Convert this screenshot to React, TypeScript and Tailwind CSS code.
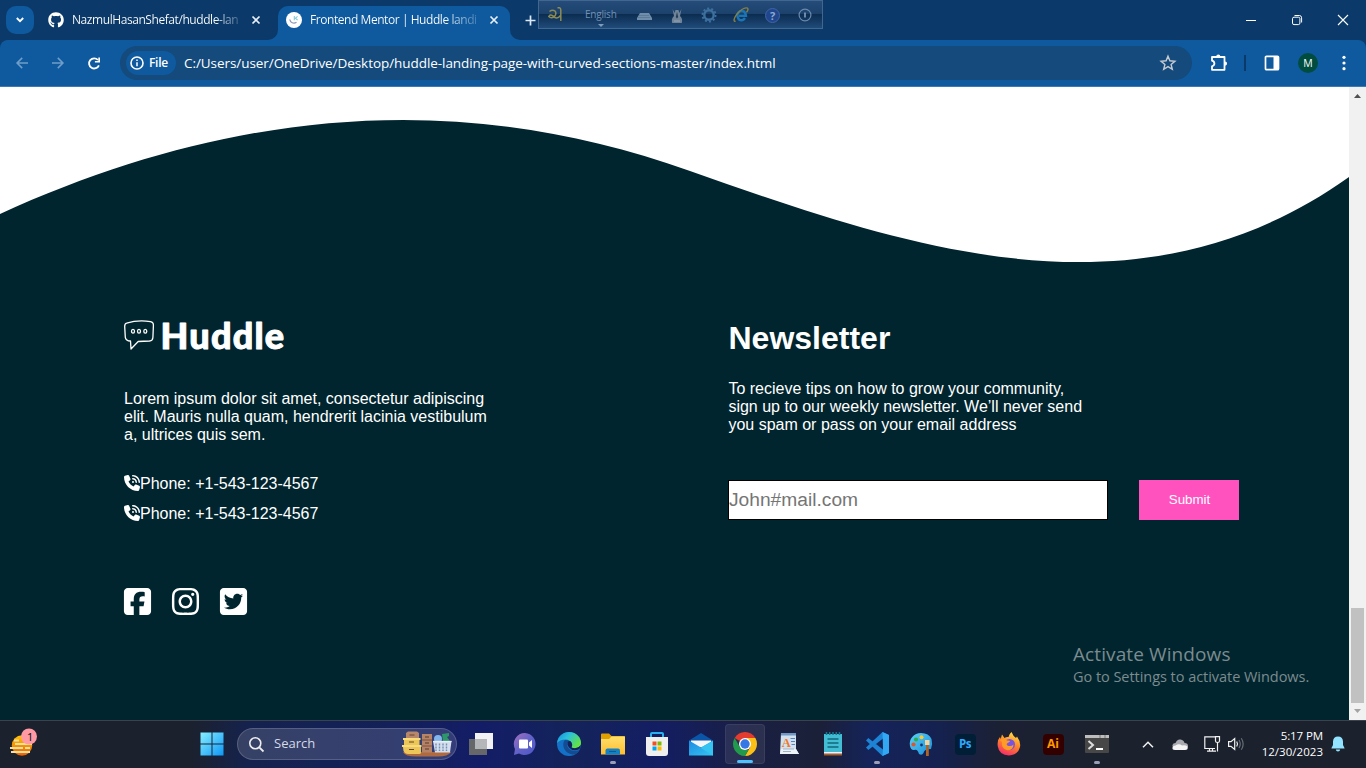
import type { ReactNode } from 'react';
import { FaGithub, FaPhoneVolume, FaSquareFacebook, FaInstagram, FaSquareTwitter } from 'react-icons/fa6';

function Svg({ w, h, children, vb }: { w: number; h: number; children: ReactNode; vb?: string }) {
  return (
    <svg width={w} height={h} viewBox={vb ?? `0 0 ${w} ${h}`} fill="none" className="block shrink-0 overflow-visible">
      {children}
    </svg>
  );
}

function Cross() {
  return (
    <Svg w={8} h={8}>
      <path d="M0.5 0.5 7.5 7.5M7.5 0.5 0.5 7.5" stroke="#e8f1fb" strokeWidth="1.7" />
    </Svg>
  );
}

function TabStrip() {
  return (
    <div className="flex h-10 items-start bg-[#0b3a6a] pt-1.5 text-white">
      <div className="ml-1.5 flex h-7 w-7 items-center justify-center rounded-[10px] bg-[#0f5a9e]">
        <Svg w={8} h={6}>
          <path d="M0.8 1 4 4.2 7.2 1" stroke="#fff" strokeWidth="1.8" />
        </Svg>
      </div>
      <div className="ml-3.5 flex h-7 w-[230px] items-center">
        <FaGithub className="h-4 w-4 shrink-0" />
        <div className="ml-2 w-[168px] whitespace-nowrap bg-linear-to-r from-white from-85% to-[#ffffff30] bg-clip-text text-[12px] tracking-[-0.43px] text-transparent">
          NazmulHasanShefat/huddle-lan
        </div>
        <div className="ml-[12px]"><Cross /></div>
      </div>
      <div className="relative flex h-[34px] w-[232px] items-start rounded-t-[10px] bg-[#0f5a9e]">
        <div className="absolute bottom-0 -left-2.5"><Svg w={10} h={10}><path d="M10 0V10H0A10 10 0 0 0 10 0Z" fill="#0f5a9e" /></Svg></div>
        <div className="absolute bottom-0 -right-2.5"><Svg w={10} h={10}><path d="M0 0V10H10A10 10 0 0 1 0 0Z" fill="#0f5a9e" /></Svg></div>
        <div className="flex h-7 items-center pl-2">
          <Svg w={16} h={16}>
            <circle cx="8" cy="8" r="8" fill="#fff" />
            <path d="M3.8 7.5C4.3 10.5 7.5 12.3 10.5 10.3" stroke="#8d97b8" strokeWidth="1.3" />
            <path d="M8.3 4V8.2M11.6 4.3 9.300 6.3 11.6 8" stroke="#8ccbd6" strokeWidth="1.1" />
          </Svg>
          <div className="ml-2 w-[168px] whitespace-nowrap bg-linear-to-r from-white from-80% to-[#ffffff30] bg-clip-text text-[12px] tracking-[-0.44px] text-transparent">
            Frontend Mentor | Huddle landi
          </div>
          <div className="ml-3"><Cross /></div>
        </div>
      </div>
      <div className="flex h-7 w-10 items-center justify-center">
        <Svg w={11} h={11}><path d="M5.5 0.5V10.5M0.5 5.5H10.5" stroke="#dce8f5" strokeWidth="1.7" /></Svg>
      </div>
      <div className="ml-auto flex h-7 items-center">
        <div className="flex w-[46px] justify-center"><Svg w={10} h={10}><path d="M0 5.5H10" stroke="#fff" /></Svg></div>
        <div className="flex w-[46px] justify-center">
          <Svg w={10} h={10}>
            <rect x="0.5" y="2.2" width="7.4" height="7.4" rx="1.5" stroke="#fff" />
            <path d="M2.5 0.5H7.3Q9.6 0.5 9.6 2.8V7.5" stroke="#fff" />
          </Svg>
        </div>
        <div className="flex w-[46px] justify-center"><Svg w={10} h={10}><path d="M0 0 10 10M10 0 0 10" stroke="#fff" strokeWidth="1.1" /></Svg></div>
      </div>
    </div>
  );
}

function InputMethodBar() {
  return (
    <div className="absolute top-0 left-[538px] flex h-[29px] w-[285px] items-center border border-[#42678f] bg-linear-to-b from-[#254c7a] from-0% via-[#1b416b] via-50% to-[#1f4b7b] text-[#7192b5]">
      <div className="absolute inset-x-0 bottom-0 h-[14px] bg-linear-to-b from-[#0b2c50] to-[#204b7a]" />
      <div className="relative flex h-full w-full">
        <div className="flex w-[34px] items-center justify-center">
          <Svg w={15} h={15}>
            <path d="M1.500 4.500Q4.500 2.200 7 4Q9 6.500 6.500 9.300Q3.200 12 .800 9.500Q2.200 6.800 5 8.800Q8.500 13.500 12.500 8.500M9.500 .800H11.500Q12.800 1 12.800 3V14" stroke="#8d8b54" strokeWidth="1.5" />
          </Svg>
        </div>
        <div className="flex w-[56px] flex-col items-center pt-[6px]">
          <span className="text-[10px] leading-[14px] tracking-[-0.2px]">English</span>
          <div className="mt-[3px]"><Svg w={6} h={3}><path d="M0 0H6L3 3Z" fill="#7c9dbd" /></Svg></div>
        </div>
        <div className="flex w-[32px] items-center justify-center pt-[3px]">
          <Svg w={15} h={7}><path d="M3 0H12L15 5V7H0V5Z" fill="#708da9" /><path d="M2.5 2.5H12.5M1.5 4.5H13.5" stroke="#46688b" strokeDasharray="1 1" /></Svg>
        </div>
        <div className="flex w-[32px] items-center justify-center pt-[3px]">
          <Svg w={12} h={15}>
            <path d="M1.5 0 3.7 4 4.5 1H7.5L8.3 4 10.5 0 9 7Q12 9.5 10.8 14H1.2Q0 9.5 3 7Z" fill="#6f8498" />
            <path d="M6 3 4.8 8 6 9.6 7.2 8Z" fill="#253c54" /><path d="M3 12H9" stroke="#93a5b4" />
          </Svg>
        </div>
        <div className="flex w-[33px] items-center justify-center pt-[1px]">
          <Svg w={16} h={16}>
            <circle cx="8" cy="8" r="6.6" stroke="#3e709f" strokeWidth="1.800" strokeDasharray="2.1 2.047" />
            <circle cx="8" cy="8" r="4.7" stroke="#3e709f" strokeWidth="2.4" />
          </Svg>
        </div>
        <div className="flex w-[32px] items-center justify-center pt-[1px]">
          <Svg w={16} h={16}>
            <path d="M12 11Q9 15 5.7 12.2Q2.5 7 7 4.3Q12.5 3 12.9 8.7H6" stroke="#1b75b5" strokeWidth="2.5" />
            <path d="M2.6 14.3Q-1 14.5 3.8 7.2Q10.5-.5 14.6 1.2Q15.8 2.4 13.5 5.4" stroke="#877f43" strokeWidth="1.4" />
          </Svg>
        </div>
        <div className="flex w-[31px] items-center justify-center pt-[1px]">
          <div className="flex h-[15px] w-[15px] items-center justify-center rounded-full border border-[#4164a7] bg-[#20468d] text-[11px] leading-none font-bold text-[#8daad0]">?</div>
        </div>
        <div className="flex w-[34px] items-center justify-center pt-[1px]">
          <Svg w={14} h={14}><circle cx="7" cy="7" r="5.9" stroke="#6b89aa" strokeWidth="1.2" /><path d="M7 4.5V9.5" stroke="#8ca8c4" strokeWidth="1.5" /></Svg>
        </div>
      </div>
    </div>
  );
}

function Toolbar() {
  return (
    <div className="bg-[#0b3a6a]">
      <div className="flex h-[47px] items-start rounded-t-[8px] border-b border-[#3d7ab3] bg-[#0f5a9e] pt-1.5 text-white">
        <div className="flex h-[34px] items-center pl-4">
          <Svg w={12} h={12}><path d="M12 6H1.2M6.2 .9 1.1 6 6.2 11.1" stroke="#6f9dc9" strokeWidth="1.6" /></Svg>
          <div className="ml-6"><Svg w={12} h={12}><path d="M0 6H10.8M5.8 .9 10.9 6 5.8 11.1" stroke="#6f9dc9" strokeWidth="1.6" /></Svg></div>
          <div className="ml-6"><Svg w={12} h={13}><path d="M10.9 8.3A5.1 5.1 0 1 1 10 3" stroke="#fff" strokeWidth="1.8" /><path d="M12 .5V5.6H6.9V4H10.3V.5Z" fill="#fff" /></Svg></div>
        </div>
        <div className="ml-5 flex h-[34px] w-[1072px] items-center rounded-full bg-[#144a7c] pl-1.5">
          <div className="flex h-6 w-[50px] items-center rounded-full bg-[#0f5a9e] pl-[4px]">
            <Svg w={14} h={14}><circle cx="7" cy="7" r="6" stroke="#fff" strokeWidth="1.6" /><path d="M7 6.2V10.2M7 3.6V5.1" stroke="#fff" strokeWidth="1.5" /></Svg>
            <span className="ml-[5px] text-[12px] font-semibold tracking-[-0.3px]">File</span>
          </div>
          <span className="ml-2 pt-px text-[13.5px] tracking-[-0.06px] whitespace-nowrap">
            C:/Users/user/OneDrive/Desktop/huddle-landing-page-with-curved-sections-master/index.html
          </span>
          <div className="mr-4 ml-auto">
            <Svg w={16} h={16}><path d="M8 1.2 9.9 5.8 14.9 6.2 11.1 9.4 12.3 14.3 8 11.6 3.7 14.3 4.9 9.4 1.1 6.2 6.1 5.8Z" stroke="#c6cbd1" strokeWidth="1.4" /></Svg>
          </div>
        </div>
        <div className="flex h-[34px] items-center">
          <div className="ml-[18px]">
            <Svg w={18} h={18}>
              <path d="M2 3H14.500V15.800H2V12.3Q4.4 11.6 4.4 9.500T2 6.700Z" stroke="#fff" strokeWidth="1.8" strokeLinejoin="round" />
              <path d="M6.2 2.700A2.1 2.1 0 0 1 10.4 2.700ZM15 7.500A2.1 2.1 0 0 1 15 11.7Z" fill="#fff" />
            </Svg>
          </div>
          <div className="ml-4 h-4 w-0.5 bg-[#0b3a6a]" />
          <div className="ml-[19px]"><Svg w={14} h={14}><rect x=".5" y=".3" width="13" height="13.4" rx="1" stroke="#fff" strokeWidth="1.7" /><path d="M8.5 .5H13.5V13.5H8.5Z" fill="#fff" /></Svg></div>
          <div className="ml-[19px] flex h-5 w-5 items-center justify-center rounded-full bg-[#004d40] pt-px text-[10.5px]">M</div>
          <div className="ml-6"><Svg w={4} h={14}><circle cx="2" cy="1.3" r="1.6" fill="#fff" /><circle cx="2" cy="7" r="1.6" fill="#fff" /><circle cx="2" cy="12.7" r="1.6" fill="#fff" /></Svg></div>
        </div>
      </div>
    </div>
  );
}

function HuddleLogo() {
  return (
    <svg width="162" height="34" viewBox="0 0 162 34" className="block overflow-visible">
      <path d="M2.6 4.2Q14 .7 26.5 2.7Q29.6 3.3 29.4 6.5L28.9 18.5Q28.7 21.7 25.5 22L14.2 22.5Q11.3 25.5 7 30L6.5 22Q1.8 21.8 1.3 18.3L.7 7.5Q.7 4.7 2.6 4.2Z" fill="none" stroke="#fff" strokeWidth="1.3" strokeLinejoin="round" />
      <g fill="none" stroke="#fff" strokeWidth="1.3">
        <ellipse cx="9" cy="12.3" rx="1.5" ry="1.9" /><ellipse cx="15" cy="12.3" rx="1.5" ry="1.9" /><ellipse cx="21.3" cy="12.3" rx="1.5" ry="1.9" />
      </g>
      <text x="36.6" y="29.6" fontFamily="Lato, sans-serif" fontWeight="900" fontSize="36" textLength="123.5" lengthAdjust="spacing" fill="#fff" stroke="#fff" strokeWidth="1" strokeLinejoin="round">Huddle</text>
    </svg>
  );
}

function Page() {
  return (
    <main className="relative h-[633px] w-[1349px] overflow-hidden bg-[#00252e] font-['Liberation_Sans',sans-serif] text-[16px] leading-[18px] text-white">
      <svg width="1349" height="190" viewBox="0 0 1349 190" className="block">
        <path d="M0 0H1349V90C1137 241 905 160 690 84C460 1 230 22 0 127Z" fill="#fff" />
      </svg>
      <div className="flex pt-[42px] pl-[124px]">
        <section className="w-[604px]">
          <HuddleLogo />
          <p className="mt-[37px] w-[370px]">
            Lorem ipsum dolor sit amet, consectetur adipiscing elit. Mauris nulla quam, hendrerit lacinia vestibulum a, ultrices quis sem.
          </p>
          <div className="mt-[31px] flex flex-col gap-3">
            <div className="flex items-center"><FaPhoneVolume className="mb-0.5 h-4 w-4" />Phone: +1-543-123-4567</div>
            <div className="flex items-center"><FaPhoneVolume className="mb-0.5 h-4 w-4" />Phone: +1-543-123-4567</div>
          </div>
          <div className="mt-[63px] -ml-[2.5px] flex gap-[17px]">
            <FaSquareFacebook className="h-[31px] w-[31px]" />
            <FaInstagram className="h-[31px] w-[31px]" />
            <FaSquareTwitter className="h-[31px] w-[31px]" />
          </div>
        </section>
        <section>
          <h1 className="mt-[1px] pl-[0.5px] text-[32px] leading-[37px] font-bold">Newsletter</h1>
          <p className="mt-[23px] w-[364px] pl-[0.4px]">
            To recieve tips on how to grow your community, sign up to our weekly newsletter. We’ll never send you spam or pass on your email address
          </p>
          <form className="mt-[46px] flex gap-[31px]" onSubmit={(e) => e.preventDefault()}>
            <input placeholder="John#mail.com" className="h-10 w-[380px] border border-black bg-white p-0 text-[19.2px] text-black outline-none placeholder:text-[#757575]" />
            <button className="h-10 w-[100px] bg-[#ff52bf] pl-px text-[13.33px] text-white">Submit</button>
          </form>
        </section>
      </div>
      <div className="absolute top-[555px] left-[1073px] font-['Open_Sans','Noto_Sans',sans-serif] whitespace-nowrap text-[#7c8b8f]">
        <div className="text-[19px] leading-6 tracking-[0.1px]">Activate Windows</div>
        <div className="text-[14.5px] leading-[22px] tracking-[-0.04px]">Go to Settings to activate Windows.</div>
      </div>
    </main>
  );
}

function Scrollbar() {
  return (
    <div className="flex h-[633px] w-[17px] flex-col items-center bg-[#f1f1f1]">
      <div className="pt-[7px]"><Svg w={7} h={4}><path d="M3.5 0 7 4H0Z" fill="#505050" /></Svg></div>
      <div className="mt-[510px] h-[95px] w-[13px] bg-[#c1c1c1]" />
      <div className="mt-[6px]"><Svg w={7} h={4}><path d="M0 0H7L3.5 4Z" fill="#a3a3a3" /></Svg></div>
    </div>
  );
}

function Task({ children, running, active }: { children: ReactNode; running?: boolean; active?: boolean }) {
  return (
    <div className="flex h-[46px] w-11 shrink-0 items-center justify-center">
      <div className={active ? 'relative flex h-10 w-10 items-center justify-center rounded border border-[#ffffff12] bg-[#ffffff14]' : 'relative flex h-10 w-10 items-center justify-center'}>
        {children}
        {running && <div className="absolute bottom-0 h-[3px] w-1.5 rounded-full bg-[#9a9fb8]" />}
        {active && <div className="absolute bottom-0 h-[3px] w-4 rounded-full bg-[#4cc2ff]" />}
      </div>
    </div>
  );
}

function Gradients() {
  return (
    <svg width="0" height="0" className="absolute">
      <defs>
        <linearGradient id="win" x1="0" y1="0" x2="24" y2="24" gradientUnits="userSpaceOnUse"><stop stopColor="#8af1ff" /><stop offset="1" stopColor="#0a95f5" /></linearGradient>
        <linearGradient id="sun" x1="0" y1="0" x2="0" y2="1"><stop stopColor="#ffc400" /><stop offset="1" stopColor="#e9600a" /></linearGradient>
        <linearGradient id="chat" x1="0" y1="0" x2="1" y2="1"><stop stopColor="#a36fc0" /><stop offset=".5" stopColor="#6262c7" /><stop offset="1" stopColor="#4c57c8" /></linearGradient>
        <linearGradient id="edge" x1="0" y1="0" x2="1" y2=".6"><stop stopColor="#1489d8" /><stop offset=".45" stopColor="#2cc0dc" /><stop offset="1" stopColor="#63e33f" /></linearGradient>
        <linearGradient id="folder" x1="0" y1="0" x2="0" y2="1"><stop stopColor="#ffdf6b" /><stop offset="1" stopColor="#fdbd30" /></linearGradient>
        <linearGradient id="mail" x1="0" y1="0" x2="1" y2="1"><stop stopColor="#1d8ae0" /><stop offset="1" stopColor="#34c5f3" /></linearGradient>
        <linearGradient id="fox" x1="0.7" y1="0" x2=".3" y2="1"><stop stopColor="#ffe14a" /><stop offset=".45" stopColor="#ff8a26" /><stop offset="1" stopColor="#f5286c" /></linearGradient>
        <linearGradient id="paint" x1="0" y1="0" x2="1" y2="1"><stop stopColor="#5bd0f8" /><stop offset="1" stopColor="#1a8dd6" /></linearGradient>
      </defs>
    </svg>
  );
}

function Taskbar() {
  return (
    <footer className="flex h-12 items-center border-t border-[#3b424d] bg-[linear-gradient(90deg,#1b212d_0px,#1b212d_190px,#15224f_250px,#13205a_400px,#131d67_480px,#14235a_570px,#131e63_660px,#191f45_740px,#1b2038_820px,#14235a_870px,#15214f_940px,#1b2133_1000px,#1b212d_1100px)] pb-px text-white">
      <div className="flex w-[190px] shrink-0 pl-2.5">
        <Svg w={28} h={28}>
          <circle cx="12" cy="15.500" r="10.2" fill="url(#sun)" />
          <path d="M4 10.500H9M5 14H22M0 18H13M15 18H20M1 22H20" stroke="#f5dfa0" strokeWidth="2" />
          <circle cx="19" cy="6.500" r="8" fill="#ff9aa5" />
          <text x="17" y="10.500" fontFamily="Noto Sans, sans-serif" fontSize="11" fill="#111">1</text>
        </Svg>
      </div>
      <Task><Svg w={24} h={24}><path d="M.5 .5H11.5V11.5H.5ZM12.5 .5H23.5V11.5H12.5ZM.5 12.5H11.5V23.5H.5ZM12.5 12.5H23.5V23.5H12.5Z" fill="url(#win)" /></Svg></Task>
      <div className="mr-0.5 ml-[3px] flex h-8 w-[220px] shrink-0 items-center rounded-full border border-[#ffffff2b] bg-[#ffffff24] pl-[11px]">
        <Svg w={15} h={15}><circle cx="6.3" cy="6.3" r="5.5" stroke="#eee" strokeWidth="1.6" /><path d="M10.3 10.3 14.5 14.5" stroke="#eee" strokeWidth="1.8" /></Svg>
        <span className="ml-[10px] text-[13px] text-[#d5d9e6]">Search</span>
        <div className="mr-1 ml-auto">
          <Svg w={50} h={26}>
            <path d="M1 21H49Q46 25.500 36 25.500H14Q3 25.500 1 21Z" fill="#b06a40" />
            <path d="M4 2 6 .5H15L17 2V7H4Z" fill="#b88769" /><path d="M2 8H17.500V14H2ZM1 16H19V22Q19 23 17 23H6Q3 23 1.500 20Z" fill="#ecc659" />
            <path d="M1 7H18.500V9H1ZM0 14H19.500V16H0Z" fill="#f8dc7a" /><path d="M7.500 4H12.500M7 11H12M7 18.500H12" stroke="#604631" />
            <path d="M20 3H30V21.500H20Z" fill="#b58468" /><path d="M20 9H30M20 15H30" stroke="#80513e" /><path d="M23 6H27M23 12H27M23 18H27" stroke="#573729" />
            <circle cx="36" cy="8" r="4" fill="#82b5ec" /><path d="M40 3 47 2V5L45 6 48 10H41Z" fill="#2c986a" />
            <path d="M31 10H49.500L48 21.500H33Z" fill="#d5deec" /><path d="M31 10.500H49.500" stroke="#e8edf5" strokeWidth="1.300" /><path d="M34 12.500V20M37.500 12.500V20M41 12.500V20M44.500 12.500V20" stroke="#7190b6" strokeWidth="1.4" strokeDasharray="2 1" />
          </Svg>
        </div>
      </div>
      <Task><Svg w={24} h={22}><rect x="6" width="18" height="16" fill="#f2f2f4" /><rect y="6" width="18" height="16" fill="#666769" /><rect x="6" y="6" width="12" height="10" fill="#b5b6ba" /></Svg></Task>
      <Task><Svg w={24} h={24}><path d="M12 1A11 11 0 1 1 6 21.500L1 23 2 17A11 11 0 0 1 12 1Z" fill="url(#chat)" /><rect x="6" y="7.500" width="9" height="9" rx="1" fill="#fff" /><path d="M16 10.500 19 8V16L16 13.500Z" fill="#fff" /></Svg></Task>
      <Task>
        <Svg w={24} h={24}>
          <circle cx="12" cy="12" r="12" fill="#1372c8" />
          <path d="M0 11C1 4 6 0 12 0C20 0 24 6 24 11C24 16 17 18 14.500 15.500C16.500 12 14 8 9 7.500C5 7.300 1.500 9 0 11Z" fill="url(#edge)" />
          <path d="M8 8C4 12 7 23 18 22.500C20 21.500 21.500 20 22.500 18C16 21 10 17 10 12C10 10.500 10.700 9 12 8.500Z" fill="#144b91" />
          <path d="M14.500 15.500Q16 13 14.500 10.500Q12.500 8 10.500 10Q9.800 13 12 15.500Q16 20 22.500 17L24 13Q20 18 14.500 15.500Z" fill="#13205a" />
        </Svg>
      </Task>
      <Task running><Svg w={24} h={22}><path d="M0 1.500Q0 .500 1 .500H8L10.500 3H23Q24 3 24 4V10H0Z" fill="#dfa000" /><path d="M0 6H8L10.500 3.500H24V21.500H0Z" fill="url(#folder)" /><path d="M4.500 21.500V17.500Q4.500 15.500 6.500 15.500H17Q19 15.500 19 17.500V21.500Z" fill="#1580c2" /><path d="M8 18.500H15" stroke="#0d5a91" /></Svg></Task>
      <Task><Svg w={24} h={24}><path d="M6 6V2Q6 1 7 1H17Q18 1 18 2V6" stroke="#29b0f0" strokeWidth="2" /><path d="M1 5H23V21Q23 24 20 24H4Q1 24 1 21Z" fill="#f0eff0" /><path d="M7.500 9.500H11.500V13.500H7.500Z" fill="#f25022" /><path d="M12.500 9.500H16.500V13.500H12.500Z" fill="#7fba00" /><path d="M7.500 14.500H11.500V18.500H7.500Z" fill="#00a4ef" /><path d="M12.500 14.500H16.500V18.500H12.500Z" fill="#ffb900" /></Svg></Task>
      <Task><Svg w={24} h={23}><path d="M0 7.500 12 0 24 7.500V12H0Z" fill="#0b55a8" /><path d="M2 7.500H22V14H2Z" fill="#f4f5f9" /><path d="M0 7.500 12 14.500 24 7.500V22.500H0Z" fill="url(#mail)" /><path d="M24 22.500 11 14.500 12 14.500 24 8Z" fill="#35c3f2" /></Svg></Task>
      <Task active>
        <Svg w={24} h={24}>
          <path d="M12 12 1.608 6A12 12 0 0 1 22.392 6Z" fill="#e33b2e" />
          <path d="M12 6H22.392A12 12 0 0 1 12 24L17.200 15Z" fill="#fbc116" />
          <path d="M1.608 6 6.800 15 12 18H15.500L12 24A12 12 0 0 1 1.608 6Z" fill="#229a4b" />
          <circle cx="12" cy="12" r="6" fill="#fff" /><circle cx="12" cy="12" r="4.700" fill="#3578e5" />
        </Svg>
      </Task>
      <Task><Svg w={20} h={22}><path d="M2 0H17V16L20 21H1Z" fill="#d3e1ef" /><path d="M2 0H17V2.500H2Z" fill="#7198c5" /><path d="M2 16H17L20 21H1Z" fill="#eef3f8" /><text x="2.800" y="13.500" fontFamily="Liberation Serif, serif" fontWeight="700" fontSize="12.500" fill="#f07928">A</text><path d="M11.500 5.500H16M12 8.500H16M12.500 11.500H16" stroke="#5284c1" /><path d="M4 16H15M4 18.500H12" stroke="#9fb3c9" /></Svg></Task>
      <Task><Svg w={18} h={24}><path d="M0 2H18V21H0Z" fill="#43bdd4" /><path d="M0 20H18V23.500H0Z" fill="#a1602c" /><path d="M0 20H18V21.500H0Z" fill="#eef" /><path d="M2.500 0V3M5.700 0V3M9 0V3M12.300 0V3M15.500 0V3" stroke="#137b91" strokeWidth="1.500" /><path d="M3.500 7H14.500M3.500 11H14.500M3.500 15H14.500" stroke="#11677b" strokeWidth="1.700" /></Svg></Task>
      <Task running><Svg w={24} h={24}><path d="M17.500 0 24 3V21L17.500 24 1 8.500 3.300 6 18 17.500V6.500L3.300 18 1 15.500Z" fill="#1d83d4" /><path d="M17.500 0 24 3V21L17.500 24 18 17Z" fill="#32a8f3" /></Svg></Task>
      <Task>
        <Svg w={24} h={24}>
          <path d="M1 14C-.5 7 5 1 12 1Q20 1 22.500 7Q24 12 22 17Q15 17 14.500 21Q13 24 10 22Q8.500 16.500 5 18Q2 18.500 1 14Z" fill="url(#paint)" />
          <circle cx="4.500" cy="12.500" r="2.100" fill="#e05524" /><circle cx="7" cy="7.500" r="2.100" fill="#29ae4d" /><circle cx="12.500" cy="5.300" r="2" fill="#ffc928" /><circle cx="12.500" cy="13" r="1.400" fill="#173370" />
          <path d="M16 8H20.500V13H16Z" fill="#f0d4a1" /><path d="M17 13H19.800V24H17Z" fill="#ac6528" />
        </Svg>
      </Task>
      <Task><div className="flex h-[21px] w-[21px] items-center justify-center rounded bg-[#001e36] text-[11.5px] leading-none font-bold tracking-[-0.4px] text-[#31a8ff]">Ps</div></Task>
      <Task>
        <Svg w={24} h={24}>
          <path d="M5 2.500 7.500 6Q9.500 4.500 11.500 5Q12 2 14.500 0Q16 4 19 6L20 4.500Q24 10 23 15Q21 23 12 23.500Q2 23 .700 14Q0 8 3 5L3.700 7Z" fill="url(#fox)" />
          <circle cx="12.500" cy="12.500" r="5.500" fill="#7855dc" /><path d="M3 8Q7 6 10 8.500Q13 8 13 9.500L10 11.500Q9 13 11.500 14Q15 14.500 16.500 12.500Q16 19 9.500 18Q4 16 5 10Z" fill="#ff9b27" />
        </Svg>
      </Task>
      <Task><div className="flex h-[21px] w-[21px] items-center justify-center rounded bg-[#330000] text-[12px] leading-none font-bold text-[#ff9a00]">Ai</div></Task>
      <Task running><Svg w={24} h={18}><rect width="24" height="18" rx="1" fill="#474747" /><path d="M0 0H24V3H0Z" fill="#bdbdbd" /><path d="M15 0V3M20 0V3" stroke="#777" /><path d="M3.500 6 8 10 3.500 14" stroke="#ddd" strokeWidth="2" /><path d="M11 14H18" stroke="#fff" strokeWidth="2" /></Svg></Task>
      <div className="flex flex-1 items-center pl-[23px]">
        <Svg w={12} h={7}><path d="M1 6.200 6 1.200 11 6.200" stroke="#f1f1f1" strokeWidth="1.500" /></Svg>
        <div className="ml-[18px]"><Svg w={16} h={11}><path d="M3 9Q0 9 .500 6Q1 4 3.500 4Q5 0 8.500 .500Q12 1 12.500 4Q16 4 16 7Q16 9 13 9Z" fill="#a9abb0" /><path d="M3 11Q0 11 .500 8.500Q1 6.500 3.500 6.500Q7 4 10 6.500Q13 5.500 15.500 7.500Q16.500 11 13 11Z" fill="#f5f5f5" /></Svg></div>
        <div className="ml-4"><Svg w={16} h={16}><path d="M11 .8H.8V12.500H11M5.500 12.500V15M3 15.200H12M8.500 12.500V15M13.500 6V15.500" stroke="#f1f1f1" strokeWidth="1.200" /><path d="M11.500 0.700H15.500V5Q15.500 6.500 13.500 6.500T11.500 5Z" stroke="#f1f1f1" strokeWidth="1.200" /></Svg></div>
        <div className="ml-2"><Svg w={16} h={14}><path d="M.6 4.700H3L6.700 1.500V12.500L3 9.300H.6Z" stroke="#f1f1f1" strokeWidth="1.200" /><path d="M8.700 4.500Q10.300 7 8.700 9.500" stroke="#f1f1f1" strokeWidth="1.200" /><path d="M11 3Q13.500 7 11 11M13.300 1.200Q17 7 13.300 12.800" stroke="#686d76" strokeWidth="1.200" /></Svg></div>
        <div className="ml-auto pr-[8px] text-right text-[11.5px] leading-4 tracking-[0.03px]">
          <div className="tracking-[-0.1px]">5:17 PM</div>
          <div>12/30/2023</div>
        </div>
        <div className="mr-[21px]"><Svg w={14} h={16}><path d="M7 .5Q11.700 .5 12 5.500V9L13.500 12V12.500H.5V12L2 9V5.500Q2.300 .5 7 .5ZM4.800 13.500H9.200Q9 15.500 7 15.500T4.800 13.500Z" fill="#91e3ff" /></Svg></div>
      </div>
    </footer>
  );
}

export default function App() {
  return (
    <div className="relative h-[768px] w-[1366px] overflow-hidden bg-[#00252e] font-['Open_Sans','Noto_Sans',sans-serif]">
      <Gradients />
      <TabStrip />
      <InputMethodBar />
      <Toolbar />
      <div className="flex">
        <Page />
        <Scrollbar />
      </div>
      <Taskbar />
    </div>
  );
}
